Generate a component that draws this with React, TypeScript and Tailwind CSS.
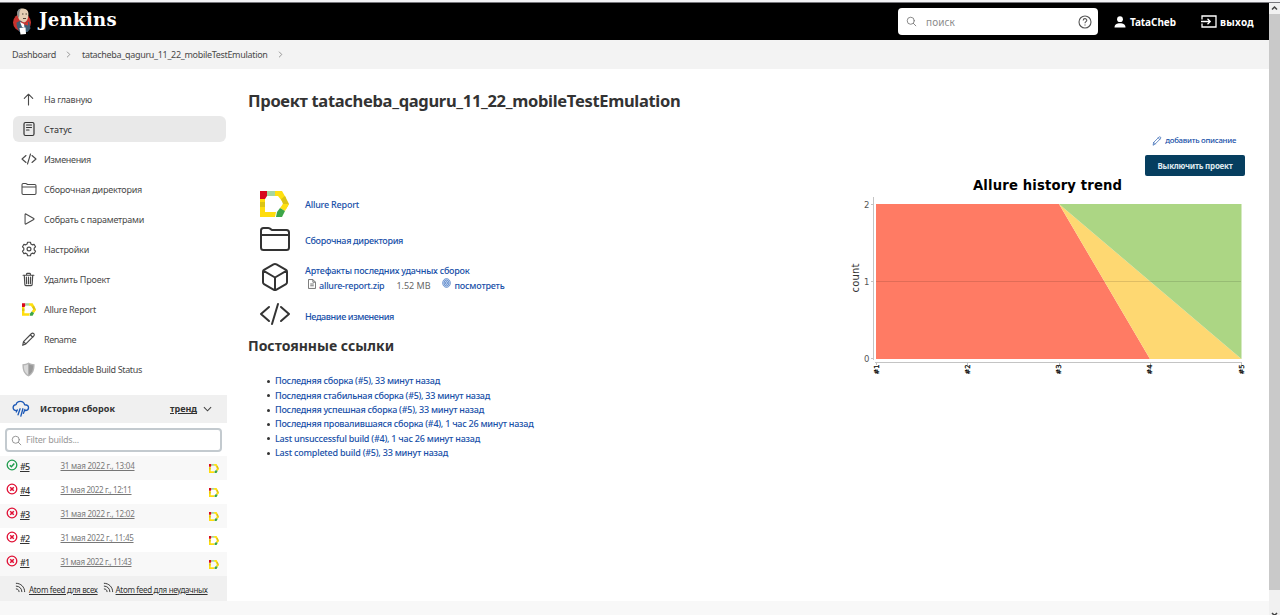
import type { ReactNode } from "react";

function T({ c = "", children }: { c?: string; children: ReactNode }) {
  return <span className={"inline-block whitespace-nowrap " + c}>{children}</span>;
}

function Allure({ c }: { c: string }) {
  return (
    <svg viewBox="0 0 29 26" className={c}>
      <path d="M0 8H5V21H16L15 26H0Z" fill="#ffdd0d" />
      <path d="M0 0H7V5L5 8H0Z" fill="#d8081c" />
      <path d="M7 0H16V5H7Z" fill="#a5d6a0" />
      <path d="M15 0H22L26 7L22 10L18 5H15Z" fill="#ffe010" />
      <path d="M25 5L29 13L26 18L22 15L23 13L21 8Z" fill="#dcc414" />
      <path d="M23 13L29 13L25 20L20 17Z" fill="#ffe010" />
      <path d="M20 17L25 20L22 26H16L17 21Z" fill="#3da648" />
      <path d="M0 11H5V16H0Z" fill="#dcc414" />
    </svg>
  );
}

const S = ({ c, w = 32, children }: { c: string; w?: number; children: ReactNode }) => (
  <svg viewBox="0 0 512 512" className={c} fill="none" stroke="currentColor" strokeWidth={w} strokeLinecap="round" strokeLinejoin="round">{children}</svg>
);
const Code = ({ c, w }: { c: string; w?: number }) => <S c={c} w={w}><path d="M160 368L32 256l128-112M352 368l128-112-128-112M304 96l-96 320" /></S>;
const Folder = ({ c, w }: { c: string; w?: number }) => <S c={c} w={w}><path d="M440 432H72a40 40 0 01-40-40V120a40 40 0 0140-40h75.89a40 40 0 0122.19 6.72l27.84 18.56a40 40 0 0022.19 6.72H440a40 40 0 0140 40v240a40 40 0 01-40 40zM32 192h448" /></S>;
const Pencil = ({ c, w }: { c: string; w?: number }) => <S c={c} w={w}><path d="M58 454l28-128L352 60c26-26 62-26 84-4s22 58-4 84L166 406zM318 94l84 84M86 326l80 80" /></S>;
const Search = ({ c }: { c: string }) => <S c={c} w={40}><circle cx="221" cy="221" r="165" /><path d="M338 338l120 120" /></S>;
const Rss = () => <S c="mb-[2px] size-[11px]" w={44}><path d="M60 60c215 0 390 175 390 390M60 190c144 0 260 116 260 260M60 320c72 0 130 58 130 130" /></S>;
const Chevron = ({ c }: { c: string }) => (
  <svg viewBox="0 0 5 8" className={c} fill="none" stroke="#8a8a8a"><path d="M.8.8L4 4 .8 7.200" /></svg>
);

const nav: [string, string, ReactNode][] = [
  ["На главную", "tracking-[-0.237px]", <S c="size-[15px]" w={38}><path d="M112 220L256 76l144 144M256 90v350" /></S>],
  ["Статус", "tracking-[0.034px]", <S c="size-[16px]" w={38}><rect x="96" y="48" width="320" height="416" rx="48" /><path d="M176 128h160M176 208h160M176 288h80" /></S>],
  ["Изменения", "tracking-[-0.319px]", <Code c="size-[16px]" w={36} />],
  ["Сборочная директория", "tracking-[-0.227px]", <Folder c="size-[16px]" w={34} />],
  ["Собрать с параметрами", "tracking-[-0.236px]", <S c="size-[14px]" w={38}><path d="M112 90v332c0 18 14 26 28 18l290-168c12-7 12-25 0-32L140 72c-14-8-28 0-28 18z" /></S>],
  ["Настройки", "tracking-[-0.233px]", <S c="size-[16px]" w={38}><path d="M210 40h92l16 58 42 24 58-16 46 80-42 42v56l42 42-46 80-58-16-42 24-16 58h-92l-16-58-42-24-58 16-46-80 42-42v-56l-42-42 46-80 58 16 42-24z" /><circle cx="256" cy="256" r="62" /></S>],
  ["Удалить Проект", "tracking-[-0.198px]", <S c="size-[15px]" w={40}><path d="M112 112l20 320c1 18 14 32 32 32h184c18 0 31-14 32-32l20-320M72 112h368M192 112V72c0-14 10-24 24-24h80c14 0 24 10 24 24v40M256 176v224M184 176l8 224M328 176l-8 224" /></S>],
  ["Allure Report", "tracking-[-0.272px]", <Allure c="h-[13px] w-[14px]" />],
  ["Rename", "tracking-[-0.464px]", <Pencil c="size-[15px]" w={40} />],
  ["Embeddable Build Status", "tracking-[-0.336px]", <svg viewBox="0 0 16 16" className="size-[15px]"><path d="M8 .5C6 2 4 2.300 1.500 2.300c0 6 1 10 6.500 13.200 5.500-3.200 6.500-7.200 6.500-13.200C12 2.300 10 2 8 .5z" fill="#b5b5b5" /><path d="M8 2C6.500 3 4.800 3.500 3 3.600c.1 4.600 1.200 8 5 10.300z" fill="#d9d9d9" /><path d="M8 2c1.500 1 3.200 1.500 5 1.600-.1 4.600-1.200 8-5 10.300z" fill="#999" /></svg>],
];

const builds: [string, string, string, boolean][] = [
  ["#5", "31 мая 2022 г., 13:04", "tracking-[-0.233px]", true],
  ["#4", "31 мая 2022 г., 12:11", "tracking-[-0.376px]", false],
  ["#3", "31 мая 2022 г., 12:02", "tracking-[-0.233px]", false],
  ["#2", "31 мая 2022 г., 11:45", "tracking-[-0.28px]", false],
  ["#1", "31 мая 2022 г., 11:43", "tracking-[-0.376px]", false],
];

const links: [string, string][] = [
  ["Последняя сборка (#5), 33 минут назад", "tracking-[-0.241px]"],
  ["Последняя стабильная сборка (#5), 33 минут назад", "tracking-[-0.267px]"],
  ["Последняя успешная сборка (#5), 33 минут назад", "tracking-[-0.241px]"],
  ["Последняя провалившаяся сборка (#4), 1 час 26 минут назад", "tracking-[-0.246px]"],
  ["Last unsuccessful build (#4), 1 час 26 минут назад", "tracking-[-0.228px]"],
  ["Last completed build (#5), 33 минут назад", "tracking-[-0.219px]"],
];

export default function App() {
  return (
    <div className="flex h-[615px] w-[1280px] flex-col overflow-hidden bg-white font-['Noto_Sans',sans-serif] text-[9px] text-[#4a4a4a]">
      <div className="h-[3px] shrink-0 border-b border-[#77777c] bg-[#f3f3f5]" />
      <div className="flex min-h-0 flex-1">
        <div className="flex w-[1269px] flex-col">
          <header className="flex h-[37px] shrink-0 items-center bg-black text-white">
            <svg viewBox="0 0 20 27" className="ml-[12px] h-[27px] w-[20px]">
              <circle cx="10" cy="14.500" r="9" fill="#c8322d" />
              <path d="M5.500 6C5 1.500 9 0 12 .7c3.500.6 5 3.300 4.300 7-.3 3.500-1.800 6.300-4.300 6.800-3.500 0-6-3.500-6.500-8.500z" fill="#e6cfb4" />
              <path d="M5.300 7C4.500 3 6.500.6 9.500.4 7.500 2 7.300 4 7.300 8l-1 2z" fill="#8b8f90" />
              <path d="M4 15l4.500-2.500 4.500 3 4-2 1.500 7-3 3.500-8 0c-2-3-3-6-3-9z" fill="#3f5d73" />
              <path d="M8.500 13l4.500 2.500L16 14v3.500l-3-1-2.500 1z" fill="#d8382f" />
              <path d="M8 14l2 5 2.500 1-.5-4z" fill="#fff" />
              <path d="M7.500 20l6-.5.5 6.500-5.500.5z" fill="#fff" />
              <path d="M10 6h1.500M13.500 6H15M11 10.500h3" stroke="#40352c" strokeWidth=".9" />
            </svg>
            <T c="-mt-[3px] ml-[7px] font-['DejaVu_Serif',serif] text-[18px] leading-[22px] font-bold tracking-[0.34px]">Jenkins</T>
            <div className="ml-auto flex h-[27px] w-[200px] items-center rounded-[4px] bg-white pr-[6px] pl-[8px] text-[#777]">
              <Search c="size-[11px]" />
              <T c="mt-px ml-[9px] text-[10px] tracking-[0.109px] text-[#8c8c8c]">поиск</T>
              <svg viewBox="0 0 14 14" className="ml-auto size-[14px]" fill="none" stroke="#555" strokeWidth="1.100"><circle cx="7" cy="7" r="6" /><path d="M5.200 5.500c0-2.500 3.600-2.400 3.600-.2C8.800 6.700 7 6.700 7 8.200M7 9.500v1" /></svg>
            </div>
            <svg viewBox="0 0 12 12" className="ml-[16px] size-[12px]" fill="#fff"><circle cx="6" cy="3.200" r="2.900" /><path d="M.5 11.500c0-3 2.500-4.200 5.500-4.200s5.500 1.200 5.500 4.200z" /></svg>
            <T c="mt-[2px] ml-[4px] text-[10px] font-bold tracking-[-0.063px]">TataCheb</T>
            <svg viewBox="0 0 16 13" className="ml-[25px] h-[13px] w-[16px]" fill="none" stroke="#fff" strokeWidth="1.300"><path d="M1 4.500V1h14v11H1V8.500M0 6.500h9M6.500 3.800L9.200 6.500 6.500 9.200" /></svg>
            <T c="mt-[2px] mr-[15px] ml-[3px] text-[10px] font-bold tracking-[0.287px]">выход</T>
          </header>
          <nav className="flex h-[29px] shrink-0 items-center bg-[#f3f3f3] pl-[12px]">
            <T c="tracking-[-0.288px]">Dashboard</T>
            <Chevron c="ml-[10px] h-[7px] w-[5px]" />
            <T c="ml-[11px] tracking-[-0.315px]">tatacheba_qaguru_11_22_mobileTestEmulation</T>
            <Chevron c="ml-[10px] h-[7px] w-[5px]" />
          </nav>
          <div className="flex h-[532px] shrink-0">
            <aside className="flex w-[227px] flex-col">
              <ul className="flex flex-col gap-[4px] pt-[17px] pl-[13px]">
                {nav.map(([t, tr, ic], i) => (
                  <li key={t} className={i === 1 ? "flex h-[26px] w-[213px] items-center rounded-[6px] bg-[#e9e9e9] text-[#333]" : "flex h-[26px] w-[213px] items-center"}>
                    <span className="ml-[7px] flex w-[17px] justify-center">{ic}</span>
                    <T c={"mt-[2px] ml-[7px] " + tr}>{t}</T>
                  </li>
                ))}
              </ul>
              <div className="mt-[13px] flex h-[28px] items-center bg-[#f0f0f0] text-[#333]">
                <S c="ml-[12px] size-[18px] text-[#1a57b5]" w={38}><path d="M130 300C70 300 32 265 32 215c0-48 38-80 84-84C130 75 180 40 236 40c66 0 110 44 124 96 66 0 110 32 110 84 0 46-38 80-90 80M150 280l-28 60M230 250l-58 170M310 250l-58 210M366 270l-40 110" /></S>
                <T c="ml-[10px] font-bold tracking-[0.056px]">История сборок</T>
                <T c="ml-[55px] font-bold tracking-[-0.031px] underline">тренд</T>
                <svg viewBox="0 0 10 6" className="ml-[6px] h-[6px] w-[9px]" fill="none" stroke="#444" strokeWidth="1.200"><path d="M1 1l4 4 4-4" /></svg>
              </div>
              <div className="mt-[5px] ml-[5px] flex h-[24px] w-[217px] items-center rounded-[4px] border-2 border-[#c3cacf] pl-[4px] text-[#888]">
                <Search c="size-[11px]" />
                <T c="ml-[4px] tracking-[-0.221px] text-[#999]">Filter builds...</T>
              </div>
              <div className="mt-[4px]">
                {builds.map(([n, d, tr, ok]) => (
                  <div key={n} className="flex h-[24px] items-center odd:bg-[#f8f8f8]">
                    <svg viewBox="0 0 12 12" className="mb-[6px] ml-[6px] size-[12px]" fill="none" stroke={ok ? "#1f9d4d" : "#e01035"} strokeWidth="1.300"><circle cx="6" cy="6" r="4.800" /><path strokeWidth="1.500" d={ok ? "M3.800 6.200l1.600 1.500L8.300 4.500" : "M4.200 4.200l3.600 3.600M7.800 4.200L4.200 7.800"} /></svg>
                    <T c="mb-[3px] ml-[2px] w-[9.5px] font-medium tracking-[-0.734px] text-[#333] underline">{n}</T>
                    <T c={"mb-[4px] ml-[31px] text-[8px] text-[#777] underline " + tr}>{d}</T>
                    <Allure c="mr-[8px] ml-auto h-[9px] w-[10px]" />
                  </div>
                ))}
              </div>
              <div className="flex h-[25px] items-center bg-[#f0f0f0] pl-[15px] text-[8px] text-[#333]">
                <Rss /><T c="mt-[2px] ml-[3px] tracking-[-0.32px] underline">Atom feed для всех</T>
                <span className="ml-[5px]"><Rss /></span><T c="mt-[2px] ml-[2px] tracking-[-0.326px] underline">Atom feed для неудачных</T>
              </div>
            </aside>
            <main className="flex flex-1 flex-col pr-[24px] pl-[21px]">
              <T c="mt-[20px] self-start text-[16.5px] leading-[24px] font-bold tracking-[-0.315px] text-[#333]">Проект tatacheba_qaguru_11_22_mobileTestEmulation</T>
              <div className="flex justify-between">
                <section className="pt-[75px] font-medium text-[#1750a8]">
                  <div className="ml-[12px] flex h-[32px] items-center"><Allure c="h-[26px] w-[29px]" /><T c="mt-[2px] ml-[16px] tracking-[-0.209px]">Allure Report</T></div>
                  <div className="ml-[11px] flex h-[37px] items-center"><Folder c="size-[32px] text-[#333]" /><T c="mt-[4px] ml-[14px] tracking-[-0.316px]">Сборочная директория</T></div>
                  <div className="ml-[11px] flex h-[39px] items-center">
                    <S c="size-[32px] text-[#333]"><path d="M448 341.370V170.610A32 32 0 00432.110 143l-152-88.460a47.940 47.940 0 00-48.240 0L79.890 143A32 32 0 0064 170.610v170.760A32 32 0 0079.890 369l152 88.460a48 48 0 0048.240 0l152-88.460A32 32 0 00448 341.370zM69 153.990l187 110 187-110M256 463.990v-200" /></S>
                    <div className="mt-[2px] ml-[14px] flex flex-col leading-[15px]">
                      <T c="self-start tracking-[-0.24px]">Артефакты последних удачных сборок</T>
                      <div className="flex items-center pl-[3px]">
                        <svg viewBox="0 0 9 11" className="-mt-[2px] h-[10px] w-[8px]" fill="none" stroke="#666"><path d="M.5.5h5l3 3v7h-8zM5.500.5v3h3M2.500 5.500h4M2.500 7.500h4" /></svg>
                        <T c="ml-[3px] tracking-[-0.22px]">allure-report.zip</T>
                        <T c="ml-[12px] font-normal tracking-[-0.031px] text-[#666]">1.52 MB</T>
                        <svg viewBox="0 0 10 11" className="-mt-[4px] ml-[12px] h-[10px] w-[9px]" fill="#c8d9f2" stroke="#3c70bd" strokeWidth=".7"><ellipse cx="5" cy="5.500" rx="4.300" ry="4.900" /><ellipse cx="5" cy="5.500" rx="2.700" ry="3.300" /><ellipse cx="5" cy="5.500" rx="1.100" ry="1.600" /></svg>
                        <T c="ml-[3px] tracking-[-0.206px]">посмотреть</T>
                      </div>
                    </div>
                  </div>
                  <div className="ml-[11px] flex h-[37px] items-center"><Code c="-mt-px size-[32px] text-[#333]" /><T c="mt-[4px] ml-[14px] tracking-[-0.386px]">Недавние изменения</T></div>
                  <T c="mt-[1px] text-[14px] leading-[24px] font-bold text-[#333]">Постоянные ссылки</T>
                  <ul className="mt-[16px] ml-[19px]">
                    {links.map(([t, tr]) => (
                      <li key={t} className="flex h-[14.33px] items-center"><span className="mt-px mr-[5px] size-[3px] rounded-full bg-[#333]" /><T c={tr}>{t}</T></li>
                    ))}
                  </ul>
                </section>
                <section className="flex w-[400px] flex-col items-end pt-[21px]">
                  <div className="mr-[9px] flex h-[14px] items-center font-medium text-[#1750a8]"><Pencil c="size-[10px]" /><T c="ml-[3px] text-[7.8px] tracking-[-0.26px]">добавить описание</T></div>
                  <div className="mt-[7px] flex h-[21px] w-[100px] items-center justify-center rounded-[2px] bg-[#063e5f] text-[8px] font-bold text-[#dfe8ee]"><T c="mt-px tracking-[-0.25px]">Выключить проект</T></div>
                  <svg viewBox="845 177 405 205" className="mt-px h-[205px] w-[405px] shrink-0 self-start font-['DejaVu_Sans',sans-serif]">
                    <text x="1047.500" y="190" textAnchor="middle" textLength="149" fontSize="13.200" fontWeight="700" fill="#000">Allure history trend</text>
                    <path d="M876 204H1059L1150 359H876Z" fill="#ff7b64" />
                    <path d="M1059 204L1241.500 359H1150Z" fill="#fed872" />
                    <path d="M1059 204H1241.500V359Z" fill="#acd684" />
                    <path d="M876 281.500H1241" stroke="#000" strokeOpacity=".12" />
                    <path d="M873.500 197V360M871 204.500h3M871 281.500h3M871 358.500h3M875 362.500H1242M876.500 362v3M967.500 362v3M1059.500 362v3M1150.500 362v3M1241.500 362v3" stroke="#c4c4c4" fill="none" />
                    <g fontSize="8.500" fill="#555" textAnchor="end"><text x="869.500" y="207.500">2</text><text x="869.500" y="284.500">1</text><text x="869.500" y="361.500">0</text></g>
                    <text transform="translate(859 278) rotate(-90)" textAnchor="middle" textLength="29" fontSize="10" fill="#333">count</text>
                    <g fontSize="6.800" fill="#000" stroke="#000" strokeWidth=".25">{["#1", "#2", "#3", "#4", "#5"].map((t, i) => <text key={t} transform={`translate(${878.5 + i * 91.3} 374.5) rotate(-90)`}>{t}</text>)}</g>
                  </svg>
                </section>
              </div>
            </main>
          </div>
          <footer className="flex-1 bg-[#f8f8f8]" />
        </div>
        <div className="flex w-[11px] flex-col bg-[#f1f1f1]">
          <svg viewBox="0 0 11 11" className="size-[11px] shrink-0" fill="none" stroke="#444" strokeWidth="1.500"><path d="M3 6.500L5.500 4 8 6.500" /></svg>
          <div className="h-[576px] shrink-0 bg-[#c9c9c9]" />
          <svg viewBox="0 0 11 11" className="mt-[19px] size-[11px] shrink-0" fill="none" stroke="#444" strokeWidth="1.500"><path d="M3 4L5.500 6.500 8 4" /></svg>
        </div>
      </div>
    </div>
  );
}
